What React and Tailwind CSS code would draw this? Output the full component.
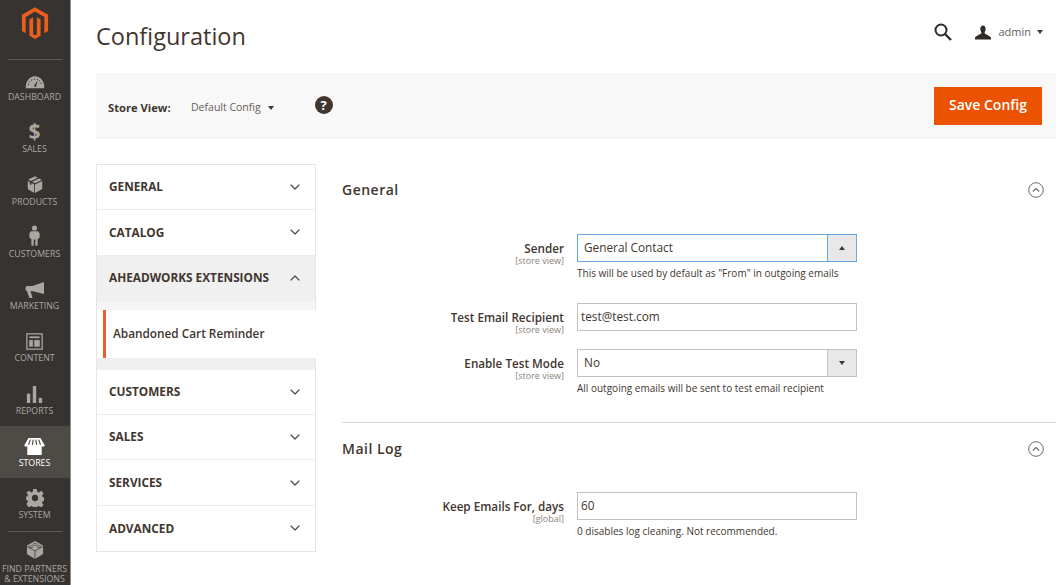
import React from "react";
import { ChevronDown, ChevronUp } from "lucide-react";

const MagentoLogo = () => (
  <svg viewBox="0 0 24 28" className="w-[28px] h-[33px]" fill="#eb5e1c">
    <path d="M12 0 0.8 6.5V20.5L4 22.4V8.4L12 3.8 20 8.4V22.4L23.2 20.5V6.5Z" />
    <path d="M13.6 23.2 12 24.1 10.4 23.2V8.6L7.2 10.5V24.5L12 27.3 16.8 24.5V10.5L13.6 8.6Z" />
  </svg>
);

const icons = {
  dashboard: (
    <svg viewBox="0 0 24 16" className="w-[20px] h-[14px]">
      <path d="M1 15.5C.2 7 5.5 1 12 1s11.800 6 11 14.500Z" fill="currentColor" />
      <path d="M4 12c0-4 3.500-7.500 8-7.500s8 3.500 8 7.500" fill="none" stroke="#373330" strokeWidth="1.200" strokeDasharray="1.500 2" />
      <path d="M10.500 13 15.500 6 13 14Z" fill="#373330" />
    </svg>
  ),
  sales: (
    <span className="text-[21px] leading-[20px] font-bold">$</span>
  ),
  products: (
    <svg viewBox="0 0 20 22" className="w-[16px] h-[18px]" fill="currentColor">
      <path d="M10 0 1.500 4 5 6 13.500 2Z" />
      <path d="M15 2.800 6.500 6.800 10 8.800 18.500 4.800Z" />
      <path d="M1 6v10l8 5V10.500L5.500 8.300V11L3.500 10V7.200Z" />
      <path d="M19 6v10l-9 5V10.500Z" />
    </svg>
  ),
  customers: (
    <svg viewBox="0 0 14 26" className="w-[11px] h-[21px]" fill="currentColor">
      <circle cx="7" cy="3.500" r="3.300" />
      <path d="M2.500 7.500h9L13.500 10v6l-2.500 1.500V26H8V18H6v8H3V17.500L.5 16v-6Z" />
    </svg>
  ),
  marketing: (
    <svg viewBox="0 0 24 20" className="w-[19px] h-[16px]" fill="currentColor">
      <path d="M24 0V15L10 11.500H7L9.500 20H5.500L2.500 11.500C0 11 0 5.500 2.500 5H9.500Z" />
    </svg>
  ),
  content: (
    <svg viewBox="0 0 20 20" className="w-[17px] h-[17px]" fill="none" stroke="currentColor">
      <rect x="1" y="1" width="18" height="18" strokeWidth="1.500" />
      <path d="M4 5h12" strokeWidth="2" />
      <path d="M4 8.500h4v7.500H4ZM10 8.500h6v7.500h-6Z" fill="currentColor" strokeWidth=".5" />
    </svg>
  ),
  reports: (
    <svg viewBox="0 0 20 20" className="w-[17px] h-[17px]" fill="currentColor">
      <rect x="1" y="9" width="4" height="11" />
      <rect x="8" y="0" width="4" height="20" />
      <rect x="15" y="14" width="4" height="6" />
    </svg>
  ),
  stores: (
    <svg viewBox="0 0 24 20" className="w-[21px] h-[17px]" fill="currentColor">
      <path d="M5 0H19L24 8.500C24 10.500 21 10.500 20.500 9.500V20H3.500V9.500C3 10.500 0 10.500 0 8.500Z" />
      <path d="M7 2 5 8M10.500 2 9.500 8M13.500 2 14.500 8M17 2 19 8" stroke="#4e4a46" strokeWidth="1.300" />
    </svg>
  ),
  system: (
    <svg viewBox="0 0 20 20" className="w-[18px] h-[18px]" fill="currentColor">
      <path fillRule="evenodd" d="M8 0h4l.5 3 1.800.8L16.800 2l2.800 2.800-1.800 2.500.7 1.700 1.500.5v3.500l-1.500.5-.7 1.800 1.800 2.500-2.800 2.800-2.500-1.800-1.800.7-.5 1.500H8l-.5-1.500-1.800-.7-2.500 1.800L.4 16.800l1.800-2.500L1.500 12.500l-1.500-.5V8.500l1.500-.5.700-1.700L.4 3.800 3.200 2l2.500 1.800L7.500 3ZM10 6.500a3.500 3.500 0 1 0 0 7 3.500 3.500 0 0 0 0-7Z" />
    </svg>
  ),
  partners: (
    <svg viewBox="0 0 20 20" className="w-[18px] h-[18px]" fill="currentColor">
      <path d="M10 0 19 5V14.500L10 20 1 14.500V5Z" />
      <path d="M1 6 10 11 19 6M10 11V20" fill="none" stroke="#373330" strokeWidth=".8" />
      <ellipse cx="10" cy="3.800" rx="2.200" ry="1.100" fill="none" stroke="#373330" strokeWidth=".7" />
      <ellipse cx="5.500" cy="6.300" rx="2.200" ry="1.100" fill="none" stroke="#373330" strokeWidth=".7" />
      <ellipse cx="14.500" cy="6.300" rx="2.200" ry="1.100" fill="none" stroke="#373330" strokeWidth=".7" />
    </svg>
  ),
};

const navItems = [
  { key: "dashboard", label: "DASHBOARD" },
  { key: "sales", label: "SALES" },
  { key: "products", label: "PRODUCTS" },
  { key: "customers", label: "CUSTOMERS" },
  { key: "marketing", label: "MARKETING" },
  { key: "content", label: "CONTENT" },
  { key: "reports", label: "REPORTS" },
  { key: "stores", label: "STORES", active: true },
  { key: "system", label: "SYSTEM" },
];

const Sidebar = () => (
  <aside className="w-[71px] shrink-0 h-[585px] bg-[#373330] text-[#aaa6a0] border-r border-[#8d8d8d] overflow-hidden">
    <div className="h-[59px] flex justify-center pt-[7px] pr-[1px]">
      <MagentoLogo />
    </div>
    <div className="mx-[8px] h-px bg-[#5f5b57]" />
    <nav>
      {navItems.map((item) => (
        <div
          key={item.key}
          className={`h-[52.300px] pr-[1px] flex flex-col items-center ${item.active ? "bg-[#4e4a46] text-white" : ""}`}
        >
          <div className="h-[28px] mt-[1px] flex items-end justify-center">{icons[item.key]}</div>
          <span className="text-[8.800px] leading-[12px] mt-[2px]">{item.label}</span>
        </div>
      ))}
    </nav>
    <div className="mx-[8px] h-px bg-[#5f5b57]" />
    <div className="flex flex-col items-center pt-[9px] pr-[1px]">
      {icons.partners}
      <span className="text-[8.800px] leading-[10px] mt-[5px] text-center whitespace-nowrap">
        FIND PARTNERS
        <br />& EXTENSIONS
      </span>
    </div>
  </aside>
);

const Header = () => (
  <header className="h-[74px] flex items-start justify-between">
    <h1 className="text-[23.500px] leading-[32px] mt-[20px] text-[#41362f]">Configuration</h1>
    <div className="flex items-center mt-[23px] mr-[13px] text-[#41362f]">
      <svg viewBox="0 0 18 18" className="w-[18px] h-[18px] text-[#2f2b29]" fill="none" stroke="currentColor">
        <circle cx="7" cy="7" r="5.500" strokeWidth="2" />
        <path d="M11 11 17 17" strokeWidth="2.400" />
      </svg>
      <svg viewBox="0 0 18 16" className="w-[16px] h-[15px] ml-[23px] text-[#2f2b29]" fill="currentColor">
        <path d="M6 3.500C6 1.500 7.300 0 9 0s3 1.500 3 3.500S10.800 8 10.800 8.500c0 1.500 6.700 3 7.200 5.500v2H0v-2c.5-2.500 7.200-4 7.200-5.500C7.200 8 6 5.500 6 3.500Z" />
      </svg>
      <span className="ml-[7px] text-[11px] text-[#676056]">admin</span>
      <span className="ml-[6px] w-0 h-0 border-x-[3.500px] border-x-transparent border-t-[4px] border-t-[#41362f]" />
    </div>
  </header>
);

const ActionBar = () => (
  <div className="h-[64px] bg-[#f8f8f8] border-y border-[#efefef] flex items-center pl-[12px] pr-[14px]">
    <span className="mt-[4px] text-[11.200px] font-bold text-[#41362f] w-[83px]">Store View:</span>
    <span className="mt-[4px] text-[10.500px] text-[#676056]">Default Config</span>
    <span className="mt-[4px] ml-[7px] w-0 h-0 border-x-[3.500px] border-x-transparent border-t-[4px] border-t-[#41362f]" />
    <span className="ml-[41px] -mt-[3px] w-[18px] h-[18px] rounded-full bg-[#41362f] text-white text-[13px] leading-[18px] font-bold text-center">
      ?
    </span>
    <button
      type="button"
      className="ml-auto w-[108px] h-[38px] pb-[3px] bg-[#eb5202] text-white text-[14px] font-semibold"
    >
      Save Config
    </button>
  </div>
);

const MenuRow = ({ label, open, last }) => {
  const Chevron = open ? ChevronUp : ChevronDown;
  return (
    <div
      className={`h-[45.300px] flex items-center justify-between pl-[12px] pr-[12px] ${open ? "bg-[#f0f0f0]" : "bg-white"} ${last ? "" : "border-b border-[#eeeeee]"}`}
    >
      <span className="text-[11.800px] font-bold text-[#41362f]">{label}</span>
      <Chevron size={16} strokeWidth={1.800} className="text-[#514943]" />
    </div>
  );
};

const SideMenu = () => (
  <div className="w-[220px] shrink-0 border border-[#e6e6e6] self-start h-[388px]">
    <MenuRow label="GENERAL" />
    <MenuRow label="CATALOG" />
    <MenuRow label="AHEADWORKS EXTENSIONS" open />
    <div className="h-[9px] bg-[#f5f5f5]" />
    <div className="h-[48px] bg-white -mr-px pl-[6px] flex">
      <div className="w-full border-l-[3px] border-[#eb5e2a] flex items-center pl-[7px]">
        <span className="text-[11.800px] font-semibold text-[#41362f]">Abandoned Cart Reminder</span>
      </div>
    </div>
    <div className="h-[12px] bg-[#f0f0f0]" />
    <MenuRow label="CUSTOMERS" />
    <MenuRow label="SALES" />
    <MenuRow label="SERVICES" />
    <MenuRow label="ADVANCED" last />
  </div>
);

const SectionTitle = ({ title }) => (
  <div className="h-[52px] flex items-center justify-between pr-[12px]">
    <h2 className="pb-[2px] text-[14px] font-semibold text-[#41362f] tracking-[0.5px]">{title}</h2>
    <svg viewBox="0 0 16 16" className="w-[16px] h-[16px] text-[#6b6b6b]" fill="none" stroke="currentColor" strokeWidth="1">
      <circle cx="8" cy="8" r="7.300" />
      <path d="M4.800 9.500 8 6.500l3.200 3" strokeWidth="1.200" />
    </svg>
  </div>
);

const Field = ({ label, scope, value, select, open, hint, className }) => (
  <div className={`flex ${className}`}>
    <div className="w-[222px] h-[28px] shrink-0 text-right pt-[6px]">
      <div className="text-[11.700px] leading-[16px] font-semibold text-[#41362f]">{label}</div>
      <div className="text-[9px] leading-[10px] text-[#8a837b]">{scope}</div>
    </div>
    <div className="ml-[13px] w-[280px]">
      <div
        className={`h-[28px] flex items-stretch border text-[11.800px] text-[#41362f] bg-white ${open ? "border-[#68a8e0]" : "border-[#c2c2c2]"}`}
      >
        <span className={`flex-1 self-center ${select ? "pl-[6px]" : "pl-[3px]"}`}>{value}</span>
        {select && (
          <span className={`w-[29px] bg-[#e8e8e8] border-l flex items-center justify-center ${open ? "border-[#68a8e0]" : "border-[#c2c2c2]"}`}>
            <span
              className={`w-0 h-0 border-x-[3px] border-x-transparent ${open ? "border-b-[4px] border-b-[#41362f]" : "border-t-[4px] border-t-[#41362f]"}`}
            />
          </span>
        )}
      </div>
      {hint && <p className="mt-[4px] text-[10px] leading-[14px] text-[#41362f] whitespace-nowrap">{hint}</p>}
    </div>
  </div>
);

export default function App() {
  return (
    <div className="w-[1063px] h-[585px] overflow-hidden bg-white flex font-['Open_Sans',sans-serif]">
      <Sidebar />
      <main className="flex-1 pl-[25px] pr-[7px] min-w-0">
        <Header />
        <ActionBar />
        <div className="flex mt-[26px]">
          <SideMenu />
          <div className="flex-1 ml-[26px]">
            <SectionTitle title="General" />
            <Field
              className="mt-[18px]"
              label="Sender"
              scope="[store view]"
              value="General Contact"
              select
              open
              hint={'This will be used by default as "From" in outgoing emails'}
            />
            <Field className="mt-[23px]" label="Test Email Recipient" scope="[store view]" value="test@test.com" />
            <Field
              className="mt-[18px]"
              label="Enable Test Mode"
              scope="[store view]"
              value="No"
              select
              hint="All outgoing emails will be sent to test email recipient"
            />
            <div className="mt-[27px] h-px bg-[#d6d6d6]" />
            <SectionTitle title="Mail Log" />
            <Field
              className="mt-[17px]"
              label="Keep Emails For, days"
              scope="[global]"
              value="60"
              hint="0 disables log cleaning. Not recommended."
            />
          </div>
        </div>
      </main>
    </div>
  );
}
